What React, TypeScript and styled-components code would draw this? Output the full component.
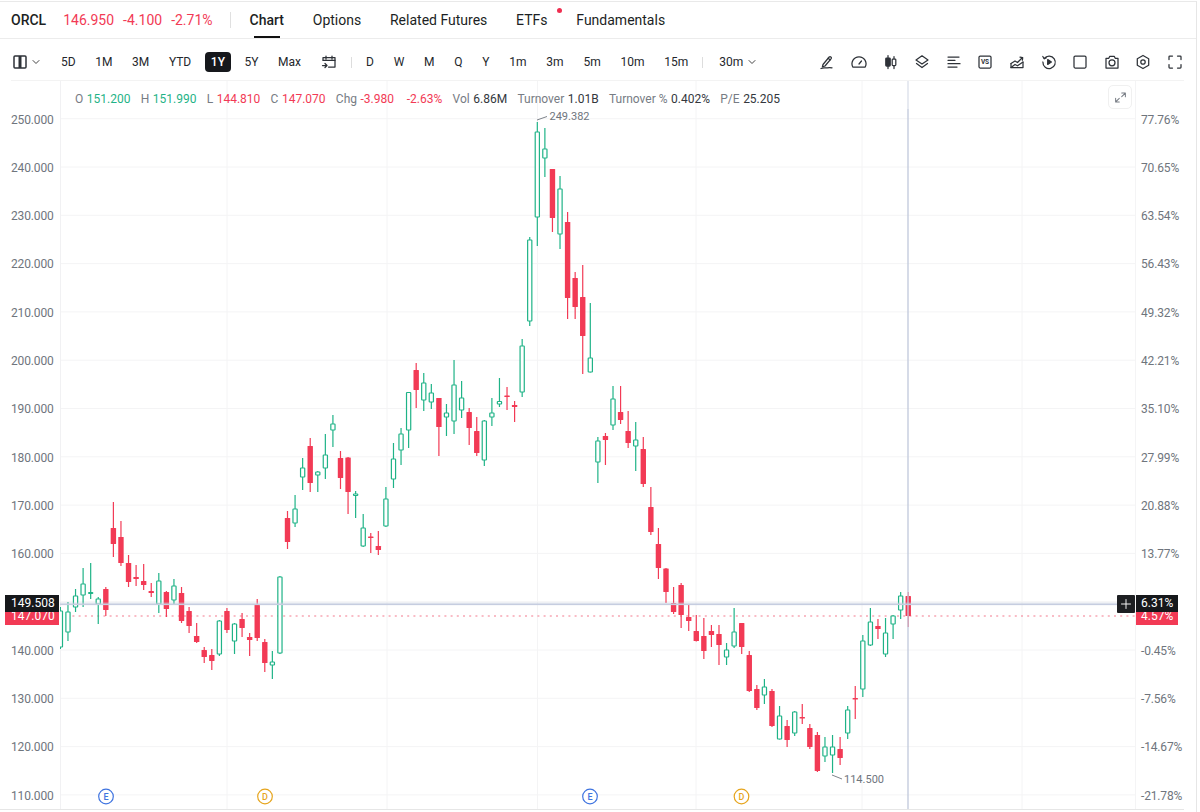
import React from "react";
import styled, { createGlobalStyle } from "styled-components";
import { ChevronDown } from "lucide-react";

const GREEN = "#1fb387";
const RED = "#f23a55";

const GlobalStyle = createGlobalStyle`
  html, body {
    margin: 0;
    padding: 0;
    background: #fff;
    overflow: hidden;
  }
  body {
    font-family: Roboto, "Liberation Sans", sans-serif;
    color: #1c1f24;
  }
`;

const Page = styled.div`
  width: 1197px;
  height: 811px;
  margin-top: 1px;
  border-top: 1px solid #e9e9e9;
  border-right: 1.5px solid #e6e6e6;
  box-sizing: border-box;
`;

const TopBar = styled.div`
  height: 37px;
  box-sizing: border-box;
  border-bottom: 1px solid #ececec;
  padding-left: 11px;
  display: flex;
  align-items: center;
  font-size: 14px;
`;

const Symbol = styled.span`
  font-weight: 500;
  margin-right: 17px;
`;

const Quote = styled.span`
  color: ${RED};
  margin-right: 9px;
`;

const Divider = styled.span`
  width: 1px;
  height: 16px;
  background: #e0e0e0;
  margin: 0 19px 0 8px;
`;

const Tab = styled.span<{ $active?: boolean }>`
  position: relative;
  margin-right: 28.8px;
  font-weight: ${(p) => (p.$active ? 500 : 400)};
  line-height: 35px;

  &::after {
    content: "";
    display: ${(p) => (p.$active ? "block" : "none")};
    position: absolute;
    left: 4px;
    right: 4px;
    bottom: 0;
    height: 2px;
    background: #111;
  }
`;

const Dot = styled.span`
  position: absolute;
  top: 5px;
  right: -14px;
  width: 5px;
  height: 5px;
  border-radius: 50%;
  background: #ef2e50;
`;

const ToolBar = styled.div`
  height: 42px;
  box-sizing: border-box;
  margin: 0 12px 0 11px;
  padding-top: 5px;
  border-bottom: 1px solid #f3f3f3;
  display: flex;
  align-items: center;
  font-size: 12px;
`;

const LayoutButton = styled.div`
  display: flex;
  align-items: center;
  gap: 1px;
  margin: 0 2px;
`;

const Periods = styled.div<{ $left: number; $gap?: number }>`
  display: flex;
  align-items: center;
  gap: ${(p) => p.$gap ?? 7.6}px;
  margin-left: ${(p) => p.$left}px;
`;

const Period = styled.span<{ $active?: boolean }>`
  padding: 3px 6px;
  line-height: 14px;
  border-radius: 4px;
  background: ${(p) => (p.$active ? "#16181c" : "transparent")};
  color: ${(p) => (p.$active ? "#fff" : "#24272c")};
  font-weight: ${(p) => (p.$active ? 500 : 400)};
`;

const ToolDivider = styled.span<{ $left: number; $right: number }>`
  width: 1px;
  height: 11px;
  background: #ddd;
  margin: 0 ${(p) => p.$right}px 0 ${(p) => p.$left}px;
`;

const DropDown = styled.span`
  display: flex;
  align-items: center;

  svg {
    margin-left: -3px;
  }
`;

const Icons = styled.div`
  margin-left: auto;
  margin-right: 1px;
  display: flex;
  align-items: center;
  gap: 15.6px;
`;

const Icon = styled.svg.attrs({ viewBox: "0 0 16 16" })`
  width: 16px;
  height: 16px;
  flex: none;
  fill: none;
  stroke: #2e3238;
  stroke-width: 1.25;
  stroke-linecap: round;
  stroke-linejoin: round;
`;

const IconLabel = styled.text`
  font-family: Roboto, "Liberation Sans", sans-serif;
  font-size: 6.5px;
  font-weight: 700;
  text-anchor: middle;
  fill: #2e3238;
  stroke: none;
`;

const ExpandIcon = styled(Icon)`
  width: 13px;
  height: 13px;
  stroke: #777c84;
`;

const PlusIcon = styled(Icon)`
  width: 12px;
  height: 12px;
  stroke: #fff;
`;

const ChartArea = styled.div`
  position: relative;
  height: 728px;
  margin-right: 12px;
  display: flex;
  overflow: hidden;
  border-bottom: 1px solid #e6e6e6;
  box-sizing: content-box;
`;

const Axis = styled.div<{ $width: number; $pad: number }>`
  flex: none;
  width: ${(p) => p.$width}px;
  box-sizing: border-box;
  padding: 14.5px 0 0 ${(p) => p.$pad}px;
  font-size: 12px;
  letter-spacing: -0.15px;
  color: #6f757d;
`;

const AxisLabel = styled.div`
  height: 48.3px;
  line-height: 48.3px;
`;

const Plot = styled.div`
  position: relative;
  flex: none;
  width: 1076px;
  height: 728px;
`;

const PlotSvg = styled.svg`
  display: block;
  width: 1076px;
  height: 728px;
`;

const Legend = styled.div`
  position: absolute;
  left: 15px;
  top: 11px;
  display: flex;
  gap: 10.3px;
  font-size: 12px;
  line-height: 14px;
  white-space: nowrap;
`;

const LegendItem = styled.span<{ $left?: number }>`
  display: flex;
  gap: 3.5px;
  color: #777c84;
  margin-left: ${(p) => p.$left ?? 0}px;
`;

const LegendValue = styled.span<{ $color?: string }>`
  color: ${(p) => p.$color || "#33373d"};
`;

const ExpandButton = styled.div`
  position: absolute;
  right: 4px;
  top: 4px;
  width: 24px;
  height: 24px;
  border: 1px solid #f0f0f0;
  border-radius: 5px;
  box-sizing: border-box;
  display: flex;
  align-items: center;
  justify-content: center;
`;

const Tag = styled.div<{ $left: number; $top: number; $width: number; $bg: string; $pad?: number }>`
  position: absolute;
  left: ${(p) => p.$left}px;
  top: ${(p) => p.$top}px;
  width: ${(p) => p.$width}px;
  height: 17px;
  line-height: 17px;
  padding-left: ${(p) => p.$pad ?? 6}px;
  box-sizing: border-box;
  background: ${(p) => p.$bg};
  color: #fff;
  font-size: 12px;
`;

const PlusBox = styled.div`
  position: absolute;
  left: 1117px;
  top: 514px;
  width: 18px;
  height: 18px;
  background: #1d1f22;
  border-radius: 1px;
  display: flex;
  align-items: center;
  justify-content: center;
`;

const Note = styled.text`
  font-family: Roboto, "Liberation Sans", sans-serif;
  font-size: 11px;
  fill: #6f757d;
`;

const MarkerLetter = styled.text<{ $color: string }>`
  font-family: Roboto, "Liberation Sans", sans-serif;
  font-size: 9px;
  font-weight: 500;
  text-anchor: middle;
  fill: ${(p) => p.$color};
`;

type Candle = [number, number, number, number, "g" | "r"];

// wick top, body top, body bottom, wick bottom (page pixels)
const candles: Candle[] = [
  [607, 611, 647, 649, "g"], [602, 612, 632, 641, "g"], [589, 596, 607, 612, "g"], [568, 584, 595, 607, "g"],
  [563, 592.5, 593.5, 599, "g"], [597, 599, 604, 624, "g"], [587, 589, 610, 616, "r"], [502, 528, 544, 557, "r"],
  [521, 537, 563, 566, "r"], [555, 563, 582, 587, "r"], [565, 577, 579, 586, "r"], [564, 581, 585, 590, "r"],
  [583, 591, 593, 597, "r"], [573, 581, 604, 613, "g"], [591, 592, 609, 617, "r"], [579, 586, 600, 604, "g"],
  [587, 593, 621, 623, "r"], [607, 611, 626, 633, "r"], [623, 636, 642, 643, "r"], [647, 650, 657, 663, "r"],
  [649, 655, 661, 670, "r"], [620, 621, 654, 656, "g"], [608, 611, 630, 633, "r"], [623, 624, 641, 654, "g"],
  [613, 619, 628, 637, "r"], [633, 637, 640, 656, "r"], [599, 605, 638, 641, "r"], [639, 642, 663, 672, "r"],
  [651, 662, 665, 679, "g"], [576, 577, 653, 654, "g"], [511, 518, 542, 549, "r"], [495, 509, 523, 527, "g"],
  [458, 468, 477, 490, "g"], [438, 446, 483, 492, "r"], [471, 472, 475, 492, "g"], [434, 455, 468, 479, "g"],
  [415, 424, 430, 447, "g"], [451, 458, 478, 489, "r"], [457, 457.5, 492, 514, "r"], [491, 494, 495.5, 518, "g"],
  [514, 528, 546, 547, "g"], [533, 536.5, 537.5, 553, "r"], [531, 546, 550, 555, "r"], [487, 499, 526, 527, "g"],
  [443, 459, 479, 488, "g"], [428, 434, 450, 465, "g"], [392, 392.5, 430, 448, "g"], [363, 370, 390, 408, "r"],
  [373, 383, 400, 411, "g"], [384, 393, 402, 409, "g"], [398, 398, 427, 456, "r"], [404, 413, 417, 436, "g"],
  [360, 385, 421, 434, "g"], [381, 398, 410, 418, "g"], [408, 412, 428, 445, "r"], [417, 431, 453, 456, "r"],
  [420, 421, 460, 466, "g"], [398, 413, 417, 426, "g"], [378, 401.5, 404, 407, "g"], [387, 395.5, 397, 410, "r"],
  [401, 405, 407, 422, "r"], [339, 346, 392, 397, "g"], [237, 240, 321, 326, "g"], [122, 132, 217, 246, "g"],
  [128, 149, 158, 177, "g"], [169, 169, 218, 232, "r"], [176, 189, 234, 249, "g"], [212, 222, 298, 319, "r"],
  [272, 278, 307, 319, "r"], [265, 297, 336, 374, "r"], [303, 358, 372, 372.5, "g"], [437, 441, 462, 483, "g"],
  [433, 436, 440, 465, "r"], [386, 399, 425, 430, "g"], [386, 412, 420, 424, "r"], [411, 431, 443, 448, "r"],
  [422, 440, 446, 471, "g"], [437, 449, 484, 487, "r"], [487, 507, 532, 535, "r"], [528, 544, 568, 579, "r"],
  [568, 568.5, 592, 603, "r"], [587, 603, 612, 614, "r"], [583, 585, 615, 628, "r"], [605, 617, 621, 631, "r"],
  [615, 631, 641, 641.5, "r"], [618, 636, 651, 659, "r"], [625, 631, 635, 647, "r"], [625, 634, 645, 665, "r"],
  [643, 650, 657, 665, "g"], [608, 632, 646, 648, "g"], [623, 623, 647, 654, "r"], [651, 655, 691, 692, "r"],
  [685, 689, 708, 710, "r"], [679, 687, 695, 704, "g"], [689, 691, 726, 727, "r"], [706, 716, 739, 739.5, "g"],
  [720, 726, 740, 747, "r"], [711, 712, 733, 736, "g"], [704, 717, 718, 724, "r"], [724, 728, 747, 749, "r"],
  [732, 735, 771, 772, "r"], [737, 747, 756, 762, "g"], [735, 747, 755, 773, "g"], [737, 749, 758, 765, "r"],
  [706, 710, 733, 739, "g"], [686, 698, 699, 719, "r"], [635, 641, 689, 697, "g"], [608, 622, 645, 646, "g"],
  [619, 626, 629, 639, "r"], [618, 633, 654, 657, "g"], [615, 616, 624, 639, "g"], [592, 596, 610, 619, "g"],
  [592, 596, 616, 627, "r"],
];

const priceLabels = ["250.000", "240.000", "230.000", "220.000", "210.000", "200.000", "190.000", "180.000", "170.000", "160.000", "150.000", "140.000", "130.000", "120.000", "110.000"];
const percentLabels = ["77.76%", "70.65%", "63.54%", "56.43%", "49.32%", "42.21%", "35.10%", "27.99%", "20.88%", "13.77%", "6.66%", "-0.45%", "-7.56%", "-14.67%", "-21.78%"];
const gridX = [227, 387, 537.5, 696, 862, 1022, 1135.5];

function candleX(i: number) {
  return 60.4 + 7.57 * i;
}

function ChartDrawing() {
  return (
    <PlotSvg viewBox="60 81 1076 728">
      {priceLabels.map((_, k) => (
        <line key={k} x1={60} x2={1136} y1={118.7 + 48.3 * k} y2={118.7 + 48.3 * k} stroke="#f4f4f5" strokeWidth={1} />
      ))}
      <line x1={60.5} x2={60.5} y1={81} y2={809} stroke="#f1f1f3" strokeWidth={1} />
      {gridX.map((x) => (
        <line key={x} x1={x} x2={x} y1={81} y2={809} stroke="#f4f4f5" strokeWidth={1} />
      ))}
      <line x1={60} x2={1136} y1={616} y2={616} stroke="#f37a8e" strokeWidth={1.2} strokeDasharray="2 4.2" />

      {candles.map(([wt, bt, bb, wb, kind], i) => {
        const x = candleX(i);
        const color = kind === "g" ? GREEN : RED;
        return (
          <g key={i}>
            <line x1={x} x2={x} y1={wt} y2={wb} stroke={color} strokeWidth={1.2} />
            {kind === "g" ? (
              <rect x={x - 2.1} y={bt} width={4.2} height={bb - bt} fill="#fff" stroke={color} strokeWidth={1.2} rx={0.5} />
            ) : (
              <rect x={x - 2.7} y={bt} width={5.4} height={Math.max(bb - bt, 1.5)} fill={color} rx={0.5} />
            )}
          </g>
        );
      })}

      <rect x={60} y={602} width={1057} height={3.5} fill="#c9cfe0" opacity={0.25} />
      <line x1={60} x2={1117} y1={604.2} y2={604.2} stroke="#c6cde0" strokeWidth={1.6} />
      <line x1={908} x2={908} y1={109} y2={809} stroke="#c3cbdd" strokeWidth={1.6} opacity={0.85} />
      <line x1={908} x2={908} y1={81} y2={109} stroke="#cfd5e3" strokeWidth={1} />

      <polyline points="537,120 547,116.5" fill="none" stroke="#6f757d" strokeWidth={0.9} />
      <Note x={549.5} y={120}>249.382</Note>
      <polyline points="832,775 842,779" fill="none" stroke="#6f757d" strokeWidth={0.9} />
      <Note x={844} y={783}>114.500</Note>

      {[
        { x: 106, letter: "E", color: "#3f74e0" },
        { x: 265, letter: "D", color: "#e6a51e" },
        { x: 590, letter: "E", color: "#3f74e0" },
        { x: 741.5, letter: "D", color: "#e6a51e" },
      ].map((m) => (
        <g key={m.x}>
          <circle cx={m.x} cy={796.5} r={7.3} fill="#fff" stroke={m.color} strokeWidth={1.2} />
          <MarkerLetter x={m.x} y={799.8} $color={m.color}>{m.letter}</MarkerLetter>
        </g>
      ))}
    </PlotSvg>
  );
}

function ToolIcons() {
  return (
    <Icons>
      <Icon>
        <path d="M4 10.5 10.2 3a1.3 1.3 0 0 1 2 1.6L6 12l-2.6.8z" />
        <path d="M9.2 4.2l2 1.7" />
        <path d="M2 14.5c2-1 3-.8 4.5-.6s3.500-.8 6.500 0" />
      </Icon>
      <Icon>
        <path d="M1.800 13h12.400a7 7 0 1 0-12.400 0z" />
        <path d="M8 10 10.500 7" />
      </Icon>
      <Icon>
        <path d="M5 1.500v13M11 2.500v12" />
        <rect x="2.800" y="4" width="4.400" height="8" rx=".8" fill="#2e3238" />
        <rect x="9.200" y="5" width="3.600" height="6.500" rx=".8" fill="#fff" />
      </Icon>
      <Icon>
        <path d="M8 1.800 14 6 8 10 2 6z" />
        <path d="M2.500 9.500 8 13.500l5.500-4" />
      </Icon>
      <Icon>
        <path d="M2 3h11M2 6.300h7M2 9.700h12M2 13h9" />
      </Icon>
      <Icon>
        <rect x="2" y="2" width="12" height="12" rx="1.200" />
        <IconLabel x="8" y="10.400">VS</IconLabel>
      </Icon>
      <Icon>
        <path d="M2 9.500 6 7l2.500 1.500L13 4" />
        <path d="M11 3.200l2.700.4-.3 2.600" />
        <path d="M2 9.500v4h12V8" />
        <path d="M2 13.500 6 10.500l2.500 1.300L14 8" />
      </Icon>
      <Icon>
        <path d="M3.200 4.500A6.200 6.200 0 1 1 1.900 8" />
        <path d="M1.800 2.500l1.400 2.300 2.300-1" />
        <path d="M6.700 5.600 10.400 8l-3.700 2.400z" fill="#2e3238" />
      </Icon>
      <Icon>
        <rect x="2" y="2" width="12" height="12" rx="1.200" />
      </Icon>
      <Icon>
        <path d="M2 4.300h2.800L5.800 2.300h4.400l1 2H14V14H2z" />
        <circle cx="8" cy="8.800" r="3" />
      </Icon>
      <Icon>
        <path d="M8 1.500 13.700 4.700v6.600L8 14.500 2.300 11.300V4.700z" />
        <circle cx="8" cy="8" r="2.200" />
      </Icon>
      <Icon>
        <path d="M5.500 2H2.800a.8.800 0 0 0-.8.800v2.700M10.500 2h2.700a.8.800 0 0 1 .8.800v2.700M5.500 14H2.800a.8.800 0 0 1-.8-.8v-2.700M10.500 14h2.700a.8.800 0 0 0 .8-.8v-2.700" />
      </Icon>
    </Icons>
  );
}

export default function App() {
  const ranges = ["5D", "1M", "3M", "YTD", "1Y", "5Y", "Max"];
  const bars = ["D", "W", "M", "Q", "Y", "1m", "3m", "5m", "10m", "15m"];

  return (
    <Page>
      <GlobalStyle />
      <TopBar>
        <Symbol>ORCL</Symbol>
        <Quote>146.950</Quote>
        <Quote>-4.100</Quote>
        <Quote>-2.71%</Quote>
        <Divider />
        <Tab $active>Chart</Tab>
        <Tab>Options</Tab>
        <Tab>Related Futures</Tab>
        <Tab>
          ETFs
          <Dot />
        </Tab>
        <Tab>Fundamentals</Tab>
      </TopBar>

      <ToolBar>
        <LayoutButton>
          <Icon>
            <rect x="1" y="2" width="12" height="12" rx="1" strokeWidth={1.5} />
            <path d="M7 2v12" strokeWidth={3} strokeLinecap="butt" />
          </Icon>
          <ChevronDown size={12} color="#444" />
        </LayoutButton>
        <Periods $left={11}>
          {ranges.map((r) => (
            <Period key={r} $active={r === "1Y"}>{r}</Period>
          ))}
        </Periods>
        <Periods $left={14}>
          <Icon>
            <path d="M2 6V3.500h12V13H7.500" />
            <path d="M2 6.300h12M5 2v3M11 2v3" />
            <path d="M1.500 11.500h4M4 9.500l2 2-2 2" />
          </Icon>
        </Periods>
        <ToolDivider $left={14} $right={8} />
        <Periods $left={0} $gap={7.75}>
          {bars.map((b) => (
            <Period key={b}>{b}</Period>
          ))}
        </Periods>
        <ToolDivider $left={8} $right={10} />
        <DropDown>
          <Period>30m</Period>
          <ChevronDown size={12} color="#444" />
        </DropDown>
        <ToolIcons />
      </ToolBar>

      <ChartArea>
        <Axis $width={60} $pad={11}>
          {priceLabels.map((p) => (
            <AxisLabel key={p}>{p}</AxisLabel>
          ))}
        </Axis>
        <Plot>
          <ChartDrawing />
          <Legend>
            <LegendItem>O <LegendValue $color={GREEN}>151.200</LegendValue></LegendItem>
            <LegendItem>H <LegendValue $color={GREEN}>151.990</LegendValue></LegendItem>
            <LegendItem>L <LegendValue $color={RED}>144.810</LegendValue></LegendItem>
            <LegendItem>C <LegendValue $color={RED}>147.070</LegendValue></LegendItem>
            <LegendItem>Chg <LegendValue $color={RED}>-3.980</LegendValue></LegendItem>
            <LegendItem $left={2.5}><LegendValue $color={RED}>-2.63%</LegendValue></LegendItem>
            <LegendItem>Vol <LegendValue>6.86M</LegendValue></LegendItem>
            <LegendItem>Turnover <LegendValue>1.01B</LegendValue></LegendItem>
            <LegendItem>Turnover % <LegendValue>0.402%</LegendValue></LegendItem>
            <LegendItem>P/E <LegendValue>25.205</LegendValue></LegendItem>
          </Legend>
          <ExpandButton>
            <ExpandIcon>
              <path d="M9.500 2.500H14v4.500M14 2.500 9.500 7M6.500 13.500H2V9M2 13.500 6.500 9" />
            </ExpandIcon>
          </ExpandButton>
        </Plot>
        <Axis $width={48} $pad={5}>
          {percentLabels.map((p) => (
            <AxisLabel key={p}>{p}</AxisLabel>
          ))}
        </Axis>

        <Tag $left={5} $top={527} $width={54} $bg={RED}>147.070</Tag>
        <Tag $left={5} $top={514} $width={54} $bg="#16181b">149.508</Tag>
        <PlusBox>
          <PlusIcon>
            <path d="M8 2v12M2 8h12" />
          </PlusIcon>
        </PlusBox>
        <Tag $left={1136} $top={527} $width={42} $bg={RED} $pad={5}>4.57%</Tag>
        <Tag $left={1136} $top={514} $width={42} $bg="#16181b" $pad={5}>6.31%</Tag>
      </ChartArea>
    </Page>
  );
}
